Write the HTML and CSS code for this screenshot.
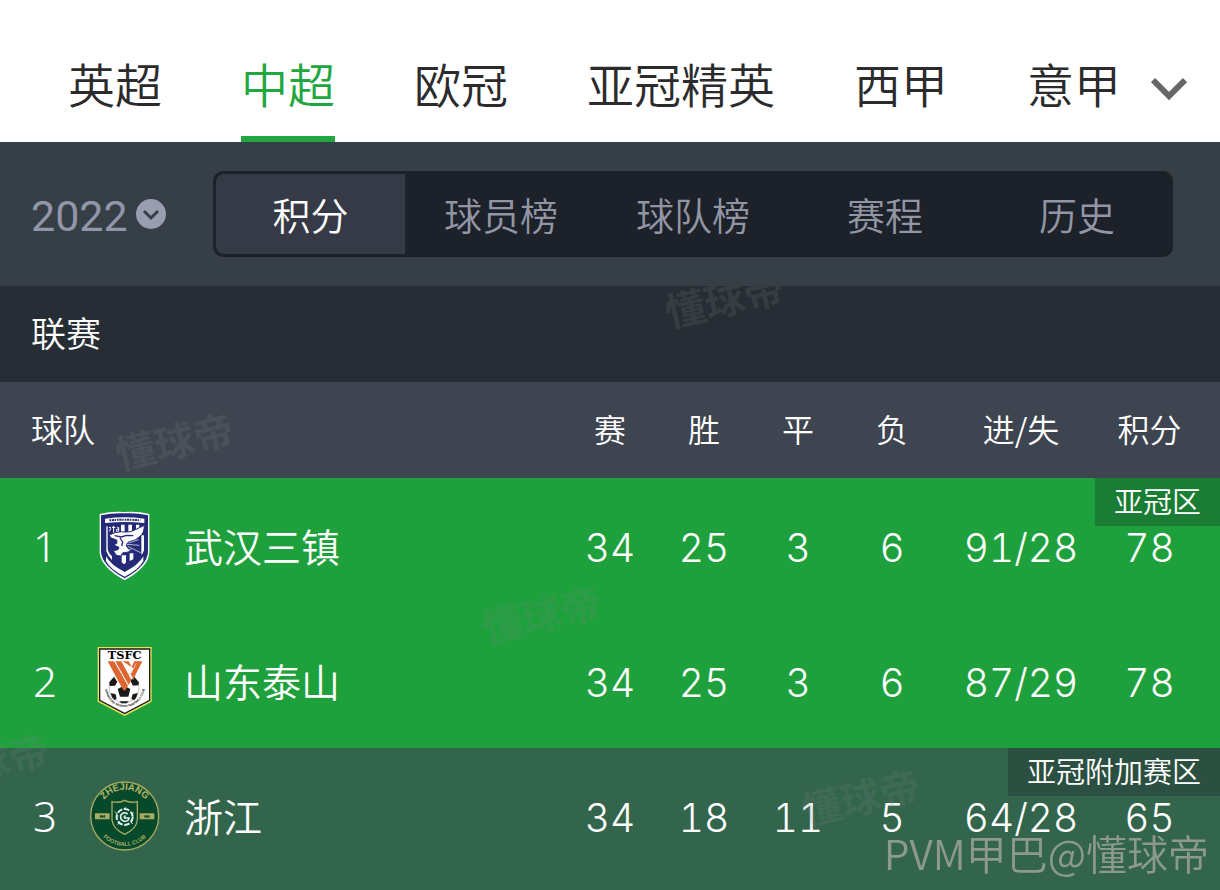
FILE: index.html
```html
<!DOCTYPE html>
<html lang="zh-CN">
<head>
    <meta charset="UTF-8">
    <meta name="viewport" content="width=device-width, initial-scale=1.0">
    <title>中超积分榜</title>
    <link rel="stylesheet" href="styles.css">
</head>
<body>

    <!-- 联赛导航 -->
    <nav class="leagues">
        <a href="#">英超</a>
        <a href="#" class="active">中超</a>
        <a href="#">欧冠</a>
        <a href="#">亚冠精英</a>
        <a href="#">西甲</a>
        <a href="#">意甲</a>
        <button class="more" aria-label="更多">
            <svg viewBox="0 0 36 24"><path d="M2 3 L18 19 L34 3"/></svg>
        </button>
    </nav>

    <!-- 赛季与分类 -->
    <div class="toolbar">
        <div class="season">
            <select aria-label="赛季">
                <option>2022</option>
            </select>
            <svg viewBox="0 0 30 30">
                <circle cx="15" cy="15" r="15"/>
                <path d="M8 12 L15 19 L22 12"/>
            </svg>
        </div>
        <div class="segments">
            <button class="active">积分</button>
            <button>球员榜</button>
            <button>球队榜</button>
            <button>赛程</button>
            <button>历史</button>
        </div>
    </div>

    <main>
        <h2>联赛</h2>

        <table>
            <colgroup>
                <col class="col-rank">
                <col class="col-logo">
                <col>
                <col class="col-num">
                <col class="col-num">
                <col class="col-num">
                <col class="col-num">
                <col class="col-goals">
                <col class="col-points">
            </colgroup>
            <thead>
                <tr>
                    <th class="team" colspan="3">球队</th>
                    <th>赛</th>
                    <th>胜</th>
                    <th>平</th>
                    <th>负</th>
                    <th>进/失</th>
                    <th class="points">积分</th>
                </tr>
            </thead>
            <tbody>
                <tr class="acl">
                    <td class="rank">1</td>
                    <td class="logo">
                        <svg viewBox="30 45 210 210">
                            <path fill="#fff" d="M59 54 Q97 45 134 48 Q171 45 208 54 V170 Q206 212 134 253 Q62 212 59 170 Z"/>
                            <path fill="#242a78" d="M63 58 Q98 50 134 52 Q170 50 204 58 V168 Q202 209 134 247 Q66 209 63 168 Z"/>
                            <path fill="#fff" d="M75 68 Q134 60 193 68 V81 Q134 75 75 81 Z"/>
                            <path fill="none" stroke="#242a78" stroke-width="6" stroke-dasharray="5 2 7 2 4 3" d="M88 73 Q134 69 181 73"/>
                            <path fill="#fff" d="M75 91 H79 V166 Q84 182 96 192 V181 Q83 169 83 155 V91 Z"/>
                            <path fill="none" stroke="#fff" stroke-width="3" d="M87 95 Q93 91 92 98 L88 106 M101 90 V111 M96 94 H106 M111 95 H116 V107 H110 V100 H116"/>
                            <path fill="#fff" d="M123 86 H134 V112 H123 Z M145 86 H156 V108 H145 Z M168 86 H178 V97 L168 102 Z M184 118 H192 V162 Q190 171 184 177 Z M125 178 H138 V200 L132 205 L125 199 Z M149 172 H160 V190 L149 195 Z"/>
                            <path fill="#fff" stroke="#242a78" stroke-width="3" d="M88 117 Q106 107 124 107 Q150 111 166 101 L193 88 Q193 111 180 121 Q168 134 152 136 Q139 139 139 150 L147 160 L160 155 Q147 172 129 170 L122 180 Q108 181 105 172 L100 164 L114 161 L117 154 Q105 151 102 145 L110 143 L111 133 L92 125 Z"/>
                            <path fill="none" stroke="#242a78" stroke-width="4" d="M104 119 L124 123 L139 118 L160 119 M120 126 L128 138 L125 150"/>
                            <path fill="none" stroke="#fff" stroke-width="2" d="M140 145 L178 148 M143 151 L182 170 M146 141 L176 131"/>
                            <path fill="#fff" d="M78 181 Q92 207 134 228 Q176 207 190 181 V195 Q177 220 134 242 Q91 220 78 195 Z"/>
                        </svg>
                    </td>
                    <td class="name">武汉三镇</td>
                    <td>34</td>
                    <td>25</td>
                    <td>3</td>
                    <td>6</td>
                    <td>91/28</td>
                    <td class="points">78<span class="zone">亚冠区</span></td>
                </tr>
                <tr class="acl">
                    <td class="rank">2</td>
                    <td class="logo">
                        <svg viewBox="30 45 210 210">
                            <path fill="#e9e45c" d="M53 48 H215 V212 L134 255 L53 212 Z"/>
                            <path fill="#1c1a18" d="M57 52 H211 V209 L134 250 L57 209 Z"/>
                            <path fill="#fff" d="M61 56 H207 V207 L134 245 L61 207 Z"/>
                            <text class="tsfc" x="134" y="85" text-anchor="middle">TSFC</text>
                            <circle cx="132" cy="171" r="45" fill="#fff" stroke="#555" stroke-width="1"/>
                            <path fill="#1c1a18" d="M113 174 L132 164 L151 174 L145 197 H120 Z M88 153 L102 138 L112 152 L105 164 L89 165 Z M151 149 L162 137 L177 154 L175 163 L159 164 Z M92 186 L107 190 L110 204 L103 207 Q94 199 92 186 Z M173 186 L158 190 L154 204 L163 208 Q171 200 173 186 Z M118 211 H146 L140 217 H124 Z"/>
                            <path fill="#df6530" d="M83 91 H102 L144 164 L136 178 H130 Z M106 91 H124 L154 146 L146 162 Z M128 91 H146 L155 108 L163 91 H187 L160 144 L151 128 L160 112 Z"/>
                            <path fill="none" stroke="#fff" stroke-width="2" d="M141 113 L160 146 M168 98 L153 128"/>
                            <path id="taishan-arc" fill="none" d="M73 165 Q82 226 134 228 Q185 226 197 163"/>
                            <text class="taishan" text-anchor="middle"><textPath href="#taishan-arc" startOffset="50%">SHANDONG TAISHAN FOOTBALL CLUB</textPath></text>
                        </svg>
                    </td>
                    <td class="name">山东泰山</td>
                    <td>34</td>
                    <td>25</td>
                    <td>3</td>
                    <td>6</td>
                    <td>87/29</td>
                    <td class="points">78</td>
                </tr>
                <tr class="playoff">
                    <td class="rank">3</td>
                    <td class="logo">
                        <svg viewBox="30 45 210 210">
                            <circle cx="134" cy="150" r="102" fill="#064a2b" stroke="#a9ab62" stroke-width="4"/>
                            <path fill="#a9ab62" d="M45 142 H89 V160 H45 Z M179 142 H223 V160 H179 Z"/>
                            <path fill="none" stroke="#064a2b" stroke-width="3" d="M61 147 V156 M67 147 V156 M61 151 H73 M73 147 V156 M195 147 V156 M201 147 V156 M195 151 H207 M207 147 V156"/>
                            <path fill="#064a2b" stroke="#a9ab62" stroke-width="4" d="M96 107 Q120 112 134 103 Q148 112 172 107 V162 Q170 188 134 205 Q98 188 96 162 Z"/>
                            <circle cx="134" cy="153" r="24" fill="none" stroke="#e5f1ed" stroke-width="6" stroke-dasharray="17 5"/>
                            <path fill="none" stroke="#e5f1ed" stroke-width="5" d="M143 144 Q130 135 122 148 Q120 163 134 166 Q146 166 147 156 H134 Q131 151 137 149"/>
                            <path fill="none" stroke="#e5f1ed" stroke-width="3" d="M112 144 L105 137 M131 129 L137 124 M155 145 L161 139 M153 168 L158 174 M118 170 L113 176"/>
                            <path id="zj-top" fill="none" d="M62 121 A77 77 0 0 1 206 121"/>
                            <path id="zj-bottom" fill="none" d="M50 184 A91 91 0 0 0 218 184"/>
                            <text class="zj-name" text-anchor="middle"><textPath href="#zj-top" startOffset="50%">ZHEJIANG</textPath></text>
                            <text class="zj-club" text-anchor="middle"><textPath href="#zj-bottom" startOffset="50%">FOOTBALL CLUB</textPath></text>
                        </svg>
                    </td>
                    <td class="name">浙江</td>
                    <td>34</td>
                    <td>18</td>
                    <td>11</td>
                    <td>5</td>
                    <td>64/28</td>
                    <td class="points">65<span class="zone">亚冠附加赛区</span></td>
                </tr>
            </tbody>
        </table>

        <!-- 水印 -->
        <div class="marks" aria-hidden="true">
            <span class="mark mark-1">懂球帝</span>
            <span class="mark mark-2">懂球帝</span>
            <span class="mark mark-3">懂球帝</span>
            <span class="mark mark-4">懂球帝</span>
            <span class="mark mark-5">懂球帝</span>
        </div>
    </main>

    <div class="author">PVM甲巴@懂球帝</div>

</body>
</html>
```

FILE: styles.css
```css
* {
    box-sizing: border-box;
}

body {
    margin: 0;
    font-family: 'Noto Sans CJK SC', sans-serif;
    font-weight: 350;
    color: #fff;
    background-color: #33654c;
}

button, select {
    padding: 0;
    border: none;
    font: inherit;
    background: none;
    cursor: pointer;
}

/* 导航 */
.leagues {
    display: flex;
    align-items: stretch;
    gap: 79px;
    height: 142px;
    padding: 24px 32px 0 68px;
    background-color: #fff;
    font-size: 47px;
    line-height: 118px;
    overflow: hidden;
}

.leagues a {
    color: #2b2b2d;
    text-decoration: none;
    white-space: nowrap;
}

.leagues a.active {
    color: #22a63f;
    border-bottom: 6px solid #22a63f;
}

.more {
    display: flex;
    align-items: center;
    margin-left: -49px;
}

.more svg {
    width: 36px;
    height: 24px;
    margin-top: 12px;
    fill: none;
    stroke: #666;
    stroke-width: 6;
}

/* 赛季和标签 */
.toolbar {
    display: flex;
    align-items: center;
    height: 144px;
    padding: 0 47px 0 31px;
    background-color: #363e46;
}

.season {
    display: flex;
    align-items: center;
    gap: 8px;
    width: 182px;
}

.season select {
    appearance: none;
    padding-top: 4px;
    color: #9296a8;
    font-family: Roboto, sans-serif;
    font-size: 43px;
    font-weight: 400;
}

.season svg {
    width: 30px;
    height: 30px;
    fill: #9a9db0;
}

.season path {
    fill: none;
    stroke: #363e46;
    stroke-width: 3;
}

.segments {
    display: flex;
    flex: 1;
    height: 86px;
    border: 3px solid #1d2129;
    border-right: none;
    border-radius: 10px;
    background-color: #1d2129;
    overflow: hidden;
}

.segments button {
    flex: 1;
    color: #9296a4;
    font-size: 38px;
    line-height: 80px;
}

.segments button.active {
    flex: 0 0 189px;
    color: #fff;
    background-color: #353a46;
    border-radius: 8px 0 0 8px;
}

/* 积分榜 */
main {
    position: relative;
}

h2 {
    margin: 0;
    padding: 0 31px 4px;
    background-color: #262d34;
    font-size: 35px;
    font-weight: 350;
    line-height: 92px;
}

table {
    width: 100%;
    table-layout: fixed;
    border-collapse: collapse;
    text-align: center;
}

.col-rank {
    width: 90px;
}

.col-logo {
    width: 70px;
}

.col-num {
    width: 94px;
}

.col-goals {
    width: 164px;
}

.col-points {
    width: 117px;
}

th, td {
    padding: 0;
}

th {
    height: 96px;
    padding-bottom: 4px;
    background-color: #3e4550;
    font-size: 32px;
    font-weight: 350;
}

th.team {
    padding-left: 31px;
    text-align: left;
}

th.points, td.points {
    padding-right: 24px;
}

td {
    height: 135px;
    padding-top: 4px;
    font-family: Inter, sans-serif;
    font-size: 39px;
    font-weight: 300;
    font-variant-numeric: tabular-nums;
}

tr.acl {
    background-color: #1ea13d;
}

tr.playoff {
    background-color: #33654c;
}

td.rank {
    padding-top: 0;
    font-family: 'Noto Sans', sans-serif;
    font-size: 42px;
    font-weight: 350;
}

td.logo {
    padding-top: 0;
}

td.logo svg {
    display: block;
    width: 70px;
    height: 70px;
}

td.name {
    padding: 0 0 2px 24px;
    font-family: 'Noto Sans CJK SC', sans-serif;
    font-size: 39px;
    font-weight: 350;
    text-align: left;
}

td.points {
    position: relative;
}

.zone {
    position: absolute;
    top: 0;
    right: 0;
    padding: 0 19px 4px;
    background-color: rgba(20, 20, 30, 0.25);
    font-family: 'Noto Sans CJK SC', sans-serif;
    font-size: 29px;
    font-weight: 350;
    line-height: 44px;
    white-space: nowrap;
}

.tsfc {
    font: bold 34px 'DejaVu Serif', serif;
}

.taishan {
    font: bold 9px 'Liberation Sans', sans-serif;
}

.zj-name {
    font: bold 28px 'Liberation Sans', sans-serif;
    fill: #b9b76a;
}

.zj-club {
    font: bold 17px 'Liberation Sans', sans-serif;
    fill: #a9ab62;
}

/* 水印 */
.marks {
    position: absolute;
    inset: 0;
    overflow: hidden;
    pointer-events: none;
}

.mark {
    position: absolute;
    color: rgba(120, 130, 130, 0.2);
    font-size: 40px;
    font-weight: 700;
    line-height: 40px;
    transform: rotate(-13deg);
}

.mark-1 { left: 664px; top: -8px; }
.mark-2 { left: 114px; top: 134px; }
.mark-3 { left: 481px; top: 307px; }
.mark-4 { left: 800px; top: 490px; }
.mark-5 { left: -71px; top: 454px; }

.author {
    position: fixed;
    right: 11px;
    bottom: 18px;
    color: rgba(190, 180, 180, 0.65);
    font-size: 41px;
    font-weight: 350;
    line-height: 40px;
}
```
